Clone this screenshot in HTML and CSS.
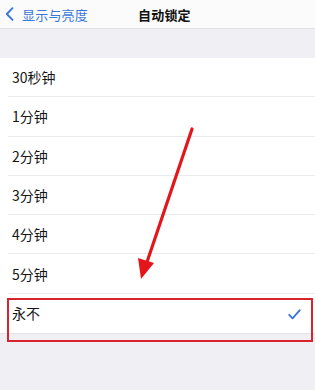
FILE: index.html
```html
<!DOCTYPE html>
<html lang="zh">
<head>
<meta charset="utf-8">
<link rel="stylesheet" href="styles.css">
</head>
<body>
<div class="screen">
  <header class="nav">
    <div class="back">
      <svg class="chev" width="9" height="14" viewBox="0 0 9 14"><path d="M7.5 1.2 L1.8 7 L7.5 12.8" fill="none" stroke="#3a78d8" stroke-width="1.9" stroke-linecap="round" stroke-linejoin="round"/></svg>
      <span class="back-text">显示与亮度</span>
    </div>
    <div class="title">自动锁定</div>
  </header>
  <div class="band"></div>
  <ul class="list">
    <li class="row"><span>30秒钟</span></li>
    <li class="row"><span>1分钟</span></li>
    <li class="row"><span>2分钟</span></li>
    <li class="row"><span>3分钟</span></li>
    <li class="row"><span>4分钟</span></li>
    <li class="row"><span>5分钟</span></li>
    <li class="row last"><span>永不</span>
      <svg class="check" width="13" height="11" viewBox="0 0 13 11"><path d="M1.2 5.8 L4.6 9.4 L11.8 1.2" fill="none" stroke="#3b74d6" stroke-width="1.8" stroke-linecap="round" stroke-linejoin="round"/></svg>
    </li>
  </ul>
  <div class="highlight"></div>
  <svg class="arrow" width="315" height="390" viewBox="0 0 315 390">
    <line x1="192" y1="129" x2="147" y2="262" stroke="#e3171b" stroke-width="3.2" stroke-linecap="round"/>
    <polygon points="141,279 138,258 154,263" fill="#e3171b"/>
  </svg>
</div>
</body>
</html>
```
FILE: styles.css
```css
html, body {
  margin: 0;
  padding: 0;
  background: #efeff4;
}
body {
  font-family: "Noto Sans CJK SC", "Noto Sans", sans-serif;
  color: #151515;
}
.screen {
  position: relative;
  width: 315px;
  height: 390px;
  overflow: hidden;
}
.nav {
  height: 29px;
  background: #fbfbfc;
  border-bottom: 1px solid #e2e2e6;
  display: flex;
  align-items: center;
  box-sizing: border-box;
}
.back {
  display: flex;
  align-items: center;
  padding-left: 5px;
  width: 128px;
}
.chev {
  margin-right: 8px;
}
.back-text {
  font-size: 13px;
  color: #3a78d8;
  letter-spacing: 0.2px;
}
.title {
  font-size: 13px;
  font-weight: 600;
  color: #111;
  letter-spacing: 0.2px;
  margin-left: 5px;
}
.band {
  height: 29px;
}
.list {
  list-style: none;
  margin: 0;
  padding: 0;
  background: #fff;
  border-bottom: 1px solid #e3e3e7;
}
.row {
  height: 39.3px;
  box-sizing: border-box;
  margin-left: 8px;
  padding-left: 4px;
  padding-right: 14px;
  display: flex;
  align-items: center;
  justify-content: space-between;
  font-size: 14px;
  border-bottom: 1px solid #ececef;
}
.row.last {
  border-bottom: none;
}
.check {
  margin-top: 3px;
}
.highlight {
  position: absolute;
  left: 7px;
  top: 298px;
  width: 306px;
  height: 44px;
  box-sizing: border-box;
  border: 2px solid #d8252d;
}
.arrow {
  position: absolute;
  left: 0;
  top: 0;
  pointer-events: none;
}
```
